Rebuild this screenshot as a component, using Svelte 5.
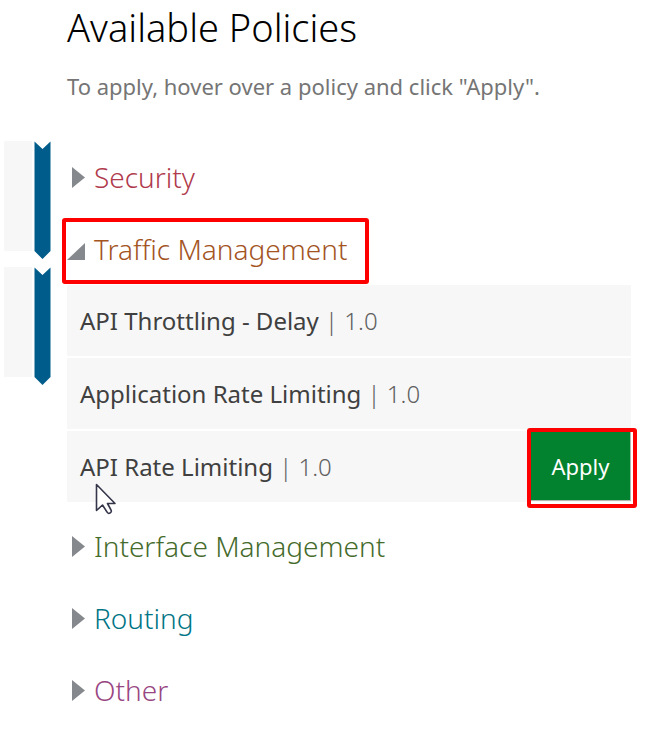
<script>
  const policies = [
    { name: 'API Throttling - Delay', version: '1.0' },
    { name: 'Application Rate Limiting', version: '1.0' },
    { name: 'API Rate Limiting', version: '1.0', active: true }
  ];

  const categories = [
    { name: 'Security', color: '#b03a4c' },
    { name: 'Traffic Management', color: '#a3541f', open: true, marked: true, policies },
    { name: 'Interface Management', color: '#456b2c' },
    { name: 'Routing', color: '#007585' },
    { name: 'Other', color: '#984682' }
  ];
</script>

<div class="page">
  <aside class="flow" aria-hidden="true">
    {#each [1, 2] as step (step)}
      <div class="step">
        <div class="card"></div>
        <svg class="ribbon" width="17" height="118" viewBox="0 0 17 118">
          <path d="M0.5 0.5 L8.5 8 L16.5 0.5 V110 L8.5 118 L0.5 110 Z" fill="#005c8a" />
        </svg>
      </div>
    {/each}
  </aside>

  <main>
    <h1>Available Policies</h1>
    <p class="hint">To apply, hover over a policy and click "Apply".</p>

    {#each categories as category (category.name)}
      <section>
        <h2>
          <button
            class="category"
            class:marked={category.marked}
            style="color: {category.color}"
            aria-expanded={!!category.open}
          >
            <svg class="arrow" width="20" height="22" viewBox="0 0 20 22" aria-hidden="true">
              {#if category.open}
                <path d="M0 22 H18 V5 Z" fill="#85888c" />
              {:else}
                <path d="M5 1 V22 L18 11.5 Z" fill="#85888c" />
              {/if}
            </svg>
            <span>{category.name}</span>
          </button>
        </h2>
        {#if category.open}
          <ul>
            {#each category.policies as policy (policy.name)}
              <li>
                <span class="name">{policy.name} <span class="version">| {policy.version}</span></span>
                {#if policy.active}
                  <button class="apply">Apply</button>
                  <svg class="cursor" width="21" height="32" viewBox="0 0 21 32" aria-hidden="true">
                    <path
                      d="M1.5 1.5 V27.5 L7.5 22 L12 29 Q13 31 15 30 Q17 29 16 27 L12.5 20.5 H20 Z"
                      fill="#fff"
                      stroke="#35364a"
                      stroke-width="1.6"
                      stroke-linejoin="round"
                    />
                  </svg>
                {/if}
              </li>
            {/each}
          </ul>
        {/if}
      </section>
    {/each}
  </main>
</div>

<style>
  :global(body) {
    margin: 0;
    background: #fff;
  }

  .page {
    display: flex;
    gap: 16px;
    padding: 0 25px 0 4px;
    font-family: 'Noto Sans', 'Open Sans', sans-serif;
  }

  .flow {
    display: flex;
    flex-direction: column;
    flex: none;
    gap: 8px;
    padding-top: 141px;
  }

  .step {
    display: flex;
    gap: 2px;
  }

  .card {
    width: 28px;
    height: 110px;
    background: #f7f7f7;
  }

  .ribbon {
    display: block;
  }

  main {
    flex: 1;
    min-width: 0;
  }

  h1 {
    margin: 0;
    padding-top: 4px;
    font-size: 38px;
    font-weight: 300;
    line-height: 46px;
    color: #000;
  }

  .hint {
    margin: 21px 0 40px;
    font-size: 22px;
    line-height: 30px;
    color: #757575;
  }

  h2 {
    margin: 0;
    font-weight: 300;
  }

  .category {
    position: relative;
    display: flex;
    align-items: center;
    gap: 7px;
    height: 72px;
    padding: 0;
    border: 0;
    background: none;
    font: inherit;
    font-size: 28px;
    line-height: 40px;
    white-space: nowrap;
    cursor: pointer;
  }

  .marked::after {
    content: '';
    position: absolute;
    inset: 5px -22px 1px -5px;
    border: 4px solid #f00;
    border-radius: 3px;
  }

  .arrow {
    flex: none;
  }

  ul {
    display: flex;
    flex-direction: column;
    gap: 2px;
    margin: 0 0 8px;
    padding: 0;
    list-style: none;
  }

  li {
    position: relative;
    display: flex;
    align-items: center;
    justify-content: space-between;
    height: 71px;
    padding-left: 13px;
    background: #f7f7f7;
  }

  .name {
    font-size: 24px;
    line-height: 36px;
    color: #404040;
  }

  .version {
    font-weight: 300;
    color: #606060;
  }

  .apply {
    position: relative;
    width: 100px;
    height: 69px;
    padding: 0;
    border: 0;
    border-right: 1px solid #b0b8b2;
    border-bottom: 1px solid #b0b8b2;
    background: #02822e;
    color: #fff;
    font: inherit;
    font-size: 22px;
    cursor: pointer;
  }

  .apply::after {
    content: '';
    position: absolute;
    inset: -4px -7px -8px -4px;
    border: 4px solid #f00;
    border-radius: 3px;
  }

  .cursor {
    position: absolute;
    top: 52px;
    left: 28px;
  }
</style>
